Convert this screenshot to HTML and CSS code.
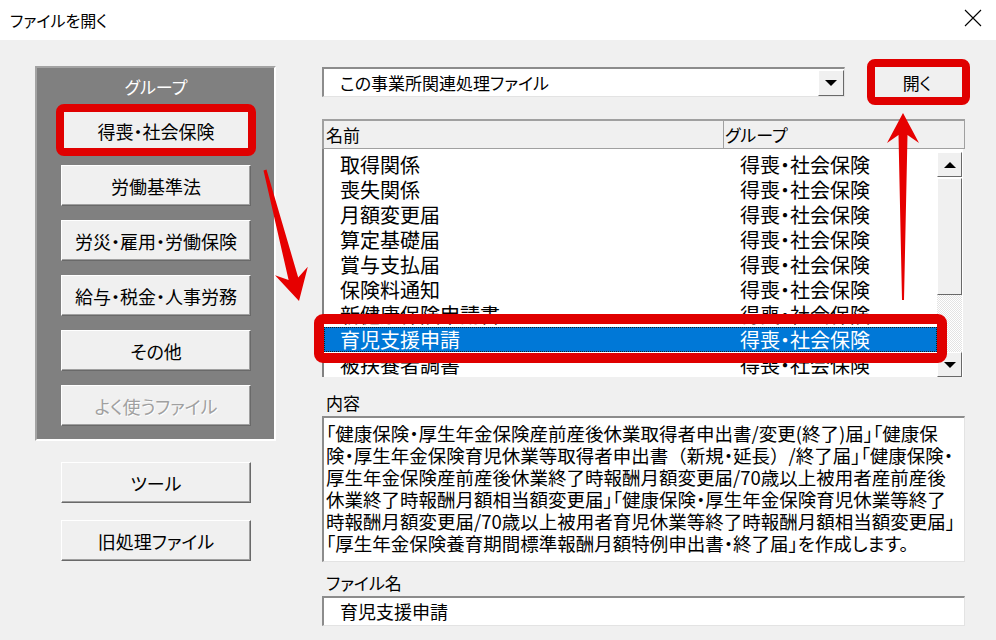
FILE: index.html
```html
<!DOCTYPE html>
<html lang="ja">
<head>
  <meta charset="UTF-8">
  <title>ファイルを開く</title>
  <link rel="stylesheet" href="styles.css">
</head>
<body>
  <div class="window">
    <div class="titlebar">
      <span class="title">ファイルを開く</span>
      <svg class="close" width="18" height="18" viewBox="0 0 18 18"><path d="M1 1L17 17M17 1L1 17" stroke="#000" stroke-width="1.1"/></svg>
    </div>

    <div class="content">
      <div class="side">
        <div class="group-panel">
          <div class="group-label">グループ</div>
          <button class="btn">得喪・社会保険</button>
          <button class="btn">労働基準法</button>
          <button class="btn">労災・雇用・労働保険</button>
          <button class="btn">給与・税金・人事労務</button>
          <button class="btn">その他</button>
          <button class="btn" disabled>よく使うファイル</button>
        </div>
        <div class="tools">
          <button class="btn">ツール</button>
          <button class="btn">旧処理ファイル</button>
        </div>
      </div>

      <div class="pane">
        <div class="top-row">
          <div class="combo">
            <span class="combo-text">この事業所関連処理ファイル</span>
            <span class="drop"><i class="tri-down"></i></span>
          </div>
          <button class="btn open">開く</button>
        </div>

        <div class="list">
          <div class="list-head">
            <div class="head-name">名前</div>
            <div class="head-group">グループ</div>
          </div>
          <div class="list-body">
            <div class="rows">
              <div class="row"><span class="c-name">取得関係</span><span class="c-group">得喪・社会保険</span></div>
              <div class="row"><span class="c-name">喪失関係</span><span class="c-group">得喪・社会保険</span></div>
              <div class="row"><span class="c-name">月額変更届</span><span class="c-group">得喪・社会保険</span></div>
              <div class="row"><span class="c-name">算定基礎届</span><span class="c-group">得喪・社会保険</span></div>
              <div class="row"><span class="c-name">賞与支払届</span><span class="c-group">得喪・社会保険</span></div>
              <div class="row"><span class="c-name">保険料通知</span><span class="c-group">得喪・社会保険</span></div>
              <div class="row"><span class="c-name">新健康保険申請書</span><span class="c-group">得喪・社会保険</span></div>
              <div class="row selected"><span class="c-name">育児支援申請</span><span class="c-group">得喪・社会保険</span></div>
              <div class="row"><span class="c-name">被扶養者調書</span><span class="c-group">得喪・社会保険</span></div>
            </div>
            <div class="scrollbar">
              <div class="sb-btn"><i class="tri-up"></i></div>
              <div class="sb-thumb"></div>
              <div class="sb-track"></div>
              <div class="sb-btn"><i class="tri-down"></i></div>
            </div>
          </div>
        </div>

        <div class="label">内容</div>
        <div class="textbox memo">
          「健康保険・厚生年金保険産前産後休業取得者申出書/変更(終了)届」「健康保<br>
          険・厚生年金保険育児休業等取得者申出書<span class="wide">（</span>新規・延長<span class="wide">）</span>/終了届」「健康保険・<br>
          厚生年金保険産前産後休業終了時報酬月額変更届/70歳以上被用者産前産後<br>
          休業終了時報酬月額相当額変更届」「健康保険・厚生年金保険育児休業等終了<br>
          時報酬月額変更届/70歳以上被用者育児休業等終了時報酬月額相当額変更届」<br>
          「厚生年金保険養育期間標準報酬月額特例申出書・終了届」を作成します。
        </div>

        <div class="label label-file">ファイル名</div>
        <div class="textbox filename">育児支援申請</div>
      </div>
    </div>

    <!-- 赤枠と矢印 -->
    <svg class="marks" width="996" height="640" viewBox="0 0 996 640">
      <g fill="none" stroke="#e00000">
        <rect x="60" y="108" width="192" height="44" rx="4" stroke-width="8"/>
        <rect x="871" y="63" width="95" height="38" rx="4" stroke-width="8"/>
        <rect x="319" y="319" width="623" height="39" rx="4" stroke-width="10"/>
      </g>
      <g fill="#e60000">
        <polygon points="263.5,170.4 266.5,169.6 298.2,277.4 307.8,266.7 299,301 275,275.3 288.6,280"/>
        <polygon points="902,300 904,300 907.5,135 919,143 903,113 887,143 898.5,135"/>
      </g>
    </svg>
  </div>
</body>
</html>
```

FILE: styles.css
```css
html, body {
  margin: 0;
  padding: 0;
}

body {
  font-family: "Noto Sans CJK JP", "Noto Sans", sans-serif;
  font-feature-settings: "palt";
  color: #000;
}

.window {
  position: relative;
  width: 996px;
  height: 640px;
  overflow: hidden;
  background: #f0f0f0;
}

.titlebar {
  display: flex;
  align-items: center;
  justify-content: space-between;
  height: 40px;
  padding: 0 14px 0 10px;
  background: #fff;
  font-size: 16px;
}
.close {
  margin-top: -4px;
}

.content {
  display: flex;
}

/* 左側 */
.side {
  width: 241px;
  padding: 26px 0 0 35px;
}
.group-panel {
  box-sizing: border-box;
  width: 241px;
  padding: 0 23px 13px 24px;
  background: #808080;
  border: 2px solid;
  border-color: #a3a3a3 #fff #fff #a3a3a3;
}
.group-label {
  height: 38px;
  line-height: 38px;
  margin-bottom: 4px;
  text-align: center;
  color: #fff;
  font-size: 17px;
}

.btn {
  display: block;
  box-sizing: border-box;
  width: 190px;
  height: 41px;
  padding: 0;
  margin: 14px 0 0;
  font: inherit;
  font-size: 18px;
  color: #000;
  background: #f0f0f0;
  border: 1px solid;
  border-color: #fff #696969 #696969 #fff;
  box-shadow: inset -1px -1px #a0a0a0;
}
.group-label + .btn {
  margin-top: 0;
}
.btn:disabled {
  color: #a0a0a0;
  text-shadow: 1px 1px #fff;
}

.tools {
  padding: 7px 0 0 26px;
}
.tools .btn + .btn {
  margin-top: 17px;
}

/* 右側 */
.pane {
  width: 643px;
  margin-left: 46px;
  padding-top: 24px;
}
.top-row {
  display: flex;
  align-items: center;
  height: 36px;
}
.combo {
  display: flex;
  align-items: center;
  box-sizing: border-box;
  width: 523px;
  height: 30px;
  background: #fff;
  border-style: solid;
  border-width: 2px 1px 1px 2px;
  border-color: #8c8c8c #e3e3e3 #e3e3e3 #8c8c8c;
}
.combo-text {
  padding-left: 16px;
  font-size: 17px;
}
.drop {
  display: flex;
  align-items: center;
  justify-content: center;
  box-sizing: border-box;
  width: 26px;
  height: 26px;
  margin-left: auto;
  background: #f0f0f0;
  border: 1px solid;
  border-color: #fff #696969 #696969 #fff;
}
.tri-down, .tri-up {
  display: block;
  width: 0;
  height: 0;
  border-left: 6px solid transparent;
  border-right: 6px solid transparent;
}
.tri-down {
  border-top: 6px solid #000;
}
.tri-up {
  border-bottom: 6px solid #000;
}

.btn.open {
  width: 96px;
  height: 36px;
  margin: 0 0 0 auto;
  font-size: 17px;
}

.list {
  margin-top: 19px;
}
.list-head {
  display: flex;
  box-sizing: border-box;
  height: 30px;
  line-height: 27px;
  font-size: 17px;
  background: #f0f0f0;
  border-style: solid;
  border-width: 2px 1px 1px 2px;
  border-color: #a0a0a0;
}
.head-name {
  width: 397px;
  padding-left: 2px;
  border-right: 1px solid #a0a0a0;
}
.head-group {
  padding-left: 1px;
}

.list-body {
  display: flex;
  box-sizing: border-box;
  width: 641px;
  height: 228px;
  background: #fff;
  border-left: 2px solid #828282;
}
.rows {
  flex: 1;
  overflow: hidden;
  padding-top: 3px;
}
.row {
  display: flex;
  height: 25px;
  line-height: 25px;
  font-size: 20px;
  white-space: nowrap;
}
.c-name {
  width: 398px;
  padding-left: 16px;
  box-sizing: border-box;
}
.c-group {
  padding-left: 18px;
}
.row.selected {
  background: #0078d7;
  color: #fff;
  outline: 1px dotted #1a1a1a;
  outline-offset: -1px;
}

.scrollbar {
  display: flex;
  flex-direction: column;
  width: 25px;
  margin-right: 1px;
  padding-top: 3px;
}
.sb-btn {
  display: flex;
  align-items: center;
  justify-content: center;
  box-sizing: border-box;
  height: 25px;
  background: #f0f0f0;
  border: 1px solid;
  border-color: #fff #696969 #696969 #fff;
}
.sb-thumb {
  box-sizing: border-box;
  height: 117px;
  margin-top: 1px;
  background: #f0f0f0;
  border: 1px solid;
  border-color: #fff #696969 #696969 #fff;
}
.sb-track {
  flex: 1;
  background: repeating-conic-gradient(#fff 0 25%, #e3e3e3 0 50%) 0 0 / 2px 2px;
}

.label {
  margin-top: 14px;
  padding-left: 4px;
  line-height: 24px;
  font-size: 17px;
}
.label-file {
  margin-top: 9px;
}
.textbox {
  box-sizing: border-box;
  width: 643px;
  margin-top: 1px;
  background: #fff;
  border-style: solid;
  border-width: 2px 1px 1px 2px;
  border-color: #8c8c8c #e3e3e3 #e3e3e3 #8c8c8c;
}
.memo {
  height: 146px;
  padding: 4px 0 0 2px;
  line-height: 22px;
  font-size: 18.5px;
  white-space: nowrap;
  overflow: hidden;
}
.memo .wide {
  font-feature-settings: normal;
}
.filename {
  height: 30px;
  padding-left: 16px;
  line-height: 26px;
  font-size: 18px;
}

.marks {
  position: absolute;
  top: 0;
  left: 0;
  pointer-events: none;
}
```
